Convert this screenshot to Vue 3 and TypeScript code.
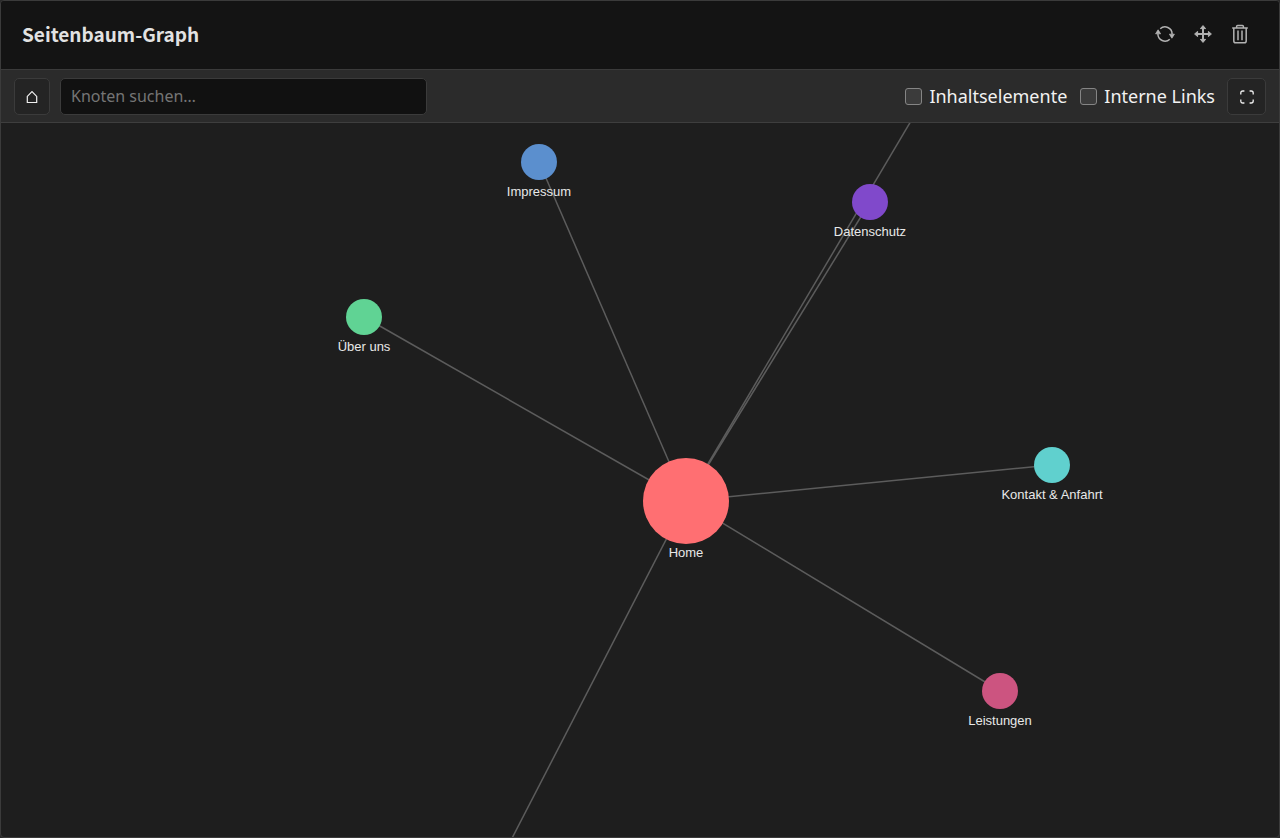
<script setup lang="ts">
import { computed, ref } from 'vue'

interface GraphNode {
  label: string
  x: number
  y: number
  r: number
  color: string
}

const home: GraphNode = { label: 'Home', x: 685, y: 378, r: 43, color: '#ff6f72' }

const children: GraphNode[] = [
  { label: 'Impressum', x: 538, y: 39, r: 18, color: '#5b8fce' },
  { label: 'Datenschutz', x: 869, y: 79, r: 18, color: '#8049cb' },
  { label: 'Über uns', x: 363, y: 194, r: 18, color: '#60d394' },
  { label: 'Kontakt & Anfahrt', x: 1051, y: 342, r: 18, color: '#60d0ce' },
  { label: 'Leistungen', x: 999, y: 568, r: 18, color: '#cc5480' },
]

// Neighbours outside the visible part of the canvas: only their edges show.
const distant = [
  { x: 968, y: -100 },
  { x: 459, y: 816 },
]

const edges = computed(() => [...children, ...distant])
const nodes = computed(() => [...children, home])

const query = ref('')
const showContent = ref(false)
const showLinks = ref(false)
</script>

<template>
  <section class="panel">
    <header class="head">
      <h1 class="title">Seitenbaum-Graph</h1>
      <div class="actions">
        <button type="button" class="icon-btn" aria-label="Aktualisieren">
          <svg width="20" height="20" viewBox="0 0 20 20" fill="none" stroke="currentColor" stroke-width="1.5">
            <path d="M5.2 4.8A7.1 7.1 0 0 1 17.1 10M14.8 15.2A7.1 7.1 0 0 1 2.9 10" />
            <path d="M14.4 10.2h5l-2.5 4zM.6 9.8h5l-2.5-4z" fill="currentColor" stroke-width="0.8" stroke-linejoin="round" />
          </svg>
        </button>
        <button type="button" class="icon-btn" aria-label="Verschieben">
          <svg width="20" height="20" viewBox="0 0 20 20" fill="none" stroke="currentColor" stroke-width="2">
            <path d="M10 3v14M3 10h14" />
            <path d="M10 1.6l2.6 3H7.4zM10 18.4l2.6-3H7.4zM1.6 10l3-2.6v5.2zM18.4 10l-3-2.6v5.2z" fill="currentColor" stroke-width="1" stroke-linejoin="round" />
          </svg>
        </button>
        <button type="button" class="icon-btn" aria-label="Löschen">
          <svg width="18" height="20" viewBox="0 0 18 20" fill="none" stroke="currentColor" stroke-width="1.5" stroke-linejoin="round">
            <path d="M1.2 4h15.6M5.6 4V2.4q0-1 1-1h4.8q1 0 1 1V4" />
            <path d="M2.8 4v13q0 1.8 1.8 1.8h8.8q1.8 0 1.8-1.8V4M7 6.6v9.6M11 6.6v9.6" />
          </svg>
        </button>
      </div>
    </header>

    <div class="toolbar">
      <button type="button" class="tool-btn" aria-label="Startseite">
        <svg width="14" height="14" viewBox="0 0 14 14" fill="none" stroke="currentColor" stroke-width="1.2">
          <path d="M2.3 12.5V6.4L7 1.7l4.7 4.7v6.1z" />
        </svg>
      </button>
      <input v-model="query" class="search" type="text" placeholder="Knoten suchen…" aria-label="Knoten suchen" />
      <div class="options">
        <label class="option"><input v-model="showContent" type="checkbox" class="check" />Inhaltselemente</label>
        <label class="option"><input v-model="showLinks" type="checkbox" class="check" />Interne Links</label>
      </div>
      <button type="button" class="tool-btn full" aria-label="Vollbild">
        <svg width="14" height="14" viewBox="0 0 14 14" fill="none" stroke="currentColor" stroke-width="1.3">
          <path d="M.8 4.4V3Q.8 1 2.8 1h1.6M9.6 1h1.6q2 0 2 2v1.4M13.2 9.6V11q0 2-2 2H9.6M4.4 13H2.8q-2 0-2-2V9.6" />
        </svg>
      </button>
    </div>

    <div class="stage">
      <svg class="graph" viewBox="0 0 1278 714" preserveAspectRatio="xMidYMin slice" role="img" aria-label="Seitenbaum">
        <line v-for="(e, i) in edges" :key="i" class="edge" :x1="home.x" :y1="home.y" :x2="e.x" :y2="e.y" />
        <g v-for="n in nodes" :key="n.label">
          <circle :cx="n.x" :cy="n.y" :r="n.r" :fill="n.color" />
          <text class="label" :x="n.x" :y="n.y + n.r + (n.r > 20 ? 13 : 16)">{{ n.label }}</text>
        </g>
      </svg>
    </div>
  </section>
</template>

<style>
body {
  margin: 0;
  background: #2a2a2a;
}
</style>

<style scoped>
.panel {
  box-sizing: border-box;
  min-height: 100vh;
  display: flex;
  flex-direction: column;
  border: 1px solid #3b3b3b;
  border-radius: 4px;
  overflow: hidden;
  background: #1e1e1e;
  color: #e8e8e8;
  font-family: "Noto Sans", "DejaVu Sans", sans-serif;
}
.head {
  display: flex;
  align-items: center;
  justify-content: space-between;
  box-sizing: border-box;
  height: 68px;
  padding: 0 30px 2px 21px;
  background: #141414;
}
.title {
  margin: 0;
  font: bold 19px/28px "Noto Sans CJK SC", "Noto Sans", sans-serif;
  color: #e2e2e2;
}
.actions {
  display: flex;
  align-items: center;
  gap: 18px;
}
.icon-btn {
  display: flex;
  padding: 0;
  border: 0;
  background: none;
  color: #b2b2b2;
}
.toolbar {
  display: flex;
  align-items: center;
  box-sizing: border-box;
  height: 54px;
  padding: 0 13px;
  border-top: 1px solid #3b3b3b;
  border-bottom: 1px solid #3e3e3e;
  background: #2b2b2b;
}
.tool-btn {
  display: flex;
  align-items: center;
  justify-content: center;
  box-sizing: border-box;
  width: 36px;
  height: 37px;
  padding: 2px 0 0;
  border: 1px solid #3b3b3b;
  border-radius: 5px;
  background: #242424;
  color: #f0f0f0;
}
.full {
  width: 39px;
}
.search {
  box-sizing: border-box;
  flex: 0 1 367px;
  min-width: 0;
  height: 37px;
  margin-left: 10px;
  padding: 0 10px;
  border: 1px solid #3b3b3b;
  border-radius: 5px;
  background: #111;
  color: #e8e8e8;
  font: 16px/20px "Noto Sans", "DejaVu Sans", sans-serif;
}
.search::placeholder {
  color: #757575;
  opacity: 1;
}
.options {
  display: flex;
  gap: 13px;
  margin: 0 12px 0 auto;
}
.option {
  display: flex;
  align-items: center;
  gap: 7px;
  font-size: 18px;
  line-height: 24px;
  color: #f2f2f2;
  white-space: nowrap;
}
.check {
  appearance: none;
  box-sizing: border-box;
  width: 17px;
  height: 17px;
  margin: 0;
  border: 1px solid #858585;
  border-radius: 3px;
  background: #3b3b3b;
}
.check:checked {
  background: #5b8fce;
}
.stage {
  flex: 1;
  display: flex;
}
.graph {
  display: block;
  width: 100%;
}
.edge {
  stroke: #5c5c5c;
  stroke-width: 1.5;
}
.label {
  fill: #e8e8e8;
  font-family: "Liberation Sans", Arial, sans-serif;
  font-size: 13px;
  text-anchor: middle;
}
</style>
